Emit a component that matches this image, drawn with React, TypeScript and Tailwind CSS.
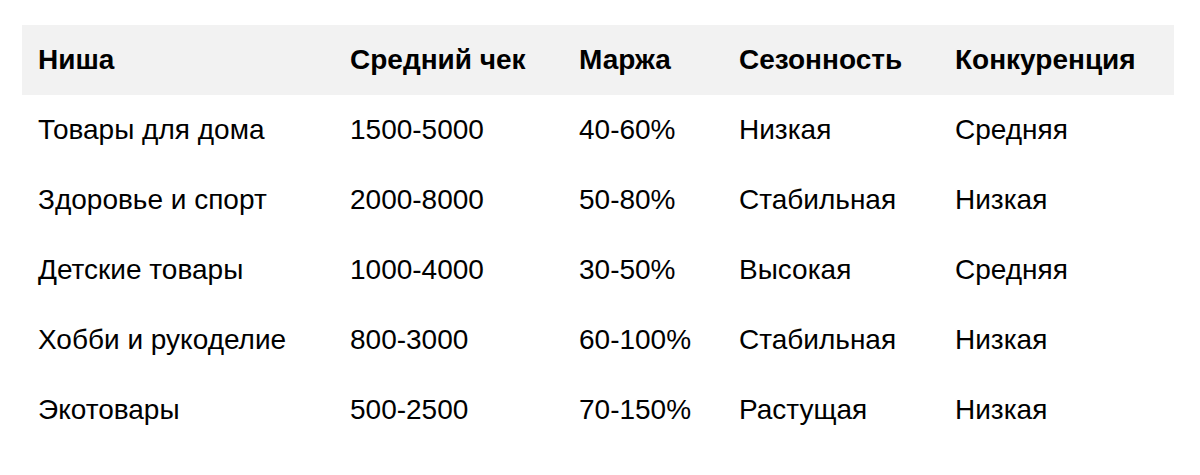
const headers = ['Ниша', 'Средний чек', 'Маржа', 'Сезонность', 'Конкуренция'];

const rows: string[][] = [
  ['Товары для дома', '1500-5000', '40-60%', 'Низкая', 'Средняя'],
  ['Здоровье и спорт', '2000-8000', '50-80%', 'Стабильная', 'Низкая'],
  ['Детские товары', '1000-4000', '30-50%', 'Высокая', 'Средняя'],
  ['Хобби и рукоделие', '800-3000', '60-100%', 'Стабильная', 'Низкая'],
  ['Экотовары', '500-2500', '70-150%', 'Растущая', 'Низкая'],
];

const cols = 'grid grid-cols-[312px_229px_160px_216px_235px]';

export default function App() {
  return (
    <div className="w-[1200px] h-[475px] bg-white pt-[25px] pl-[22px] text-[28px] leading-none text-black font-['Liberation_Sans',Arial,sans-serif]">
      <div className="w-[1152px]">
        <div className={`${cols} h-[70px] items-center bg-[#f2f2f2] font-bold`}>
          {headers.map((h) => (
            <div key={h} className="pl-4">
              {h}
            </div>
          ))}
        </div>
        {rows.map((r) => (
          <div key={r[0]} className={`${cols} h-[70px] items-center`}>
            {r.map((c, i) => (
              <div key={i} className="pl-4">
                {c}
              </div>
            ))}
          </div>
        ))}
      </div>
    </div>
  );
}
